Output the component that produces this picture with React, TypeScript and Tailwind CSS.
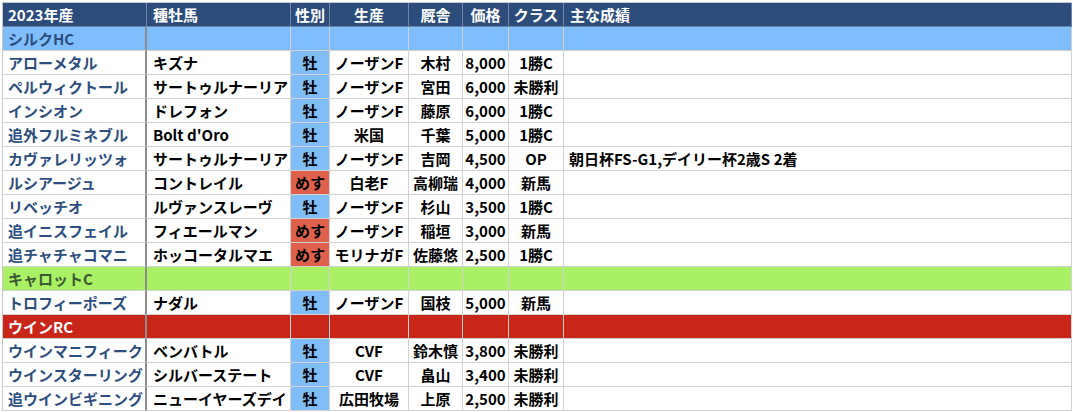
import React from "react";

type Horse = {
  name: string;
  sire: string;
  sex: "牡" | "めす";
  farm: string;
  trainer: string;
  price: string;
  cls: string;
  note?: string;
};

type Group = {
  title: string;
  band: "blue" | "green" | "red";
  horses: Horse[];
};

const groups: Group[] = [
  {
    title: "シルクHC",
    band: "blue",
    horses: [
      { name: "アローメタル", sire: "キズナ", sex: "牡", farm: "ノーザンF", trainer: "木村", price: "8,000", cls: "1勝C" },
      { name: "ペルウィクトール", sire: "サートゥルナーリア", sex: "牡", farm: "ノーザンF", trainer: "宮田", price: "6,000", cls: "未勝利" },
      { name: "インシオン", sire: "ドレフォン", sex: "牡", farm: "ノーザンF", trainer: "藤原", price: "6,000", cls: "1勝C" },
      { name: "追外フルミネブル", sire: "Bolt d'Oro", sex: "牡", farm: "米国", trainer: "千葉", price: "5,000", cls: "1勝C" },
      { name: "カヴァレリッツォ", sire: "サートゥルナーリア", sex: "牡", farm: "ノーザンF", trainer: "吉岡", price: "4,500", cls: "OP", note: "朝日杯FS-G1,デイリー杯2歳S 2着" },
      { name: "ルシアージュ", sire: "コントレイル", sex: "めす", farm: "白老F", trainer: "高柳瑞", price: "4,000", cls: "新馬" },
      { name: "リベッチオ", sire: "ルヴァンスレーヴ", sex: "牡", farm: "ノーザンF", trainer: "杉山", price: "3,500", cls: "1勝C" },
      { name: "追イニスフェイル", sire: "フィエールマン", sex: "めす", farm: "ノーザンF", trainer: "稲垣", price: "3,000", cls: "新馬" },
      { name: "追チャチャコマニ", sire: "ホッコータルマエ", sex: "めす", farm: "モリナガF", trainer: "佐藤悠", price: "2,500", cls: "1勝C" },
    ],
  },
  {
    title: "キャロットC",
    band: "green",
    horses: [
      { name: "トロフィーポーズ", sire: "ナダル", sex: "牡", farm: "ノーザンF", trainer: "国枝", price: "5,000", cls: "新馬" },
    ],
  },
  {
    title: "ウインRC",
    band: "red",
    horses: [
      { name: "ウインマニフィーク", sire: "ベンバトル", sex: "牡", farm: "CVF", trainer: "鈴木慎", price: "3,800", cls: "未勝利" },
      { name: "ウインスターリング", sire: "シルバーステート", sex: "牡", farm: "CVF", trainer: "畠山", price: "3,400", cls: "未勝利" },
      { name: "追ウインビギニング", sire: "ニューイヤーズデイ", sex: "牡", farm: "広田牧場", trainer: "上原", price: "2,500", cls: "未勝利" },
    ],
  },
];

const rowGrid =
  "grid grid-cols-[144px_144px_39px_79px_54px_46px_55px_508px] h-[24px]";
const cell =
  "h-[24px] border-r border-b border-[#d2d2d2] flex items-center whitespace-nowrap overflow-hidden leading-[23px]";
const firstCol = "border-r-2 border-r-[#8e8e8e]";

function Header() {
  const h =
    "h-[24px] bg-[#2c4d7b] border-r border-b border-[#6f86a8] flex items-center whitespace-nowrap overflow-hidden text-white leading-[23px]";
  return (
    <div className={rowGrid}>
      <div className={`${h} pl-[5px]`}>2023年産</div>
      <div className={`${h} pl-[6px]`}>種牡馬</div>
      <div className={`${h} justify-center`}>性別</div>
      <div className={`${h} justify-center`}>生産</div>
      <div className={`${h} justify-center`}>厩舎</div>
      <div className={`${h} justify-center`}>価格</div>
      <div className={`${h} justify-center`}>クラス</div>
      <div className={`${h} pl-[6px]`}>主な成績</div>
    </div>
  );
}

function Band({ title, band }: { title: string; band: Group["band"] }) {
  const bg =
    band === "blue" ? "bg-[#7fbefc]" : band === "green" ? "bg-[#aaf064]" : "bg-[#c9261a]";
  const fg =
    band === "blue" ? "text-[#2d4e7e]" : band === "green" ? "text-[#3b5a34]" : "text-white";
  return (
    <div className={`${rowGrid} ${bg}`}>
      <div className={`${cell} ${firstCol} ${fg} pl-[5px]`}>{title}</div>
      <div className={cell}></div>
      <div className={cell}></div>
      <div className={cell}></div>
      <div className={cell}></div>
      <div className={cell}></div>
      <div className={cell}></div>
      <div className={cell}></div>
    </div>
  );
}

function Row({ h }: { h: Horse }) {
  const sexBg = h.sex === "牡" ? "bg-[#80bdf9]" : "bg-[#e0614b]";
  return (
    <div className={`${rowGrid} bg-white text-black`}>
      <div className={`${cell} ${firstCol} text-[#2d4e7e] pl-[5px]`}>{h.name}</div>
      <div className={`${cell} pl-[6px]`}>{h.sire}</div>
      <div className={`${cell} ${sexBg} justify-center`}>{h.sex}</div>
      <div className={`${cell} justify-center`}>{h.farm}</div>
      <div className={`${cell} justify-center`}>{h.trainer}</div>
      <div className={`${cell} justify-center`}>{h.price}</div>
      <div className={`${cell} justify-center`}>{h.cls}</div>
      <div className={`${cell} pl-[5px]`}>{h.note ?? ""}</div>
    </div>
  );
}

export default function App() {
  return (
    <div
      className="w-[1073px] h-[412px] bg-white pt-[2px] pl-[2px] overflow-hidden font-bold text-[15px]"
      style={{ fontFamily: '"Noto Sans CJK JP", "Noto Sans", sans-serif' }}
    >
      <div className="w-[1070px] border-l border-t border-[#c8c8c8]">
        <Header />
        {groups.map((g) => (
          <React.Fragment key={g.title}>
            <Band title={g.title} band={g.band} />
            {g.horses.map((h) => (
              <Row key={h.name} h={h} />
            ))}
          </React.Fragment>
        ))}
      </div>
    </div>
  );
}
